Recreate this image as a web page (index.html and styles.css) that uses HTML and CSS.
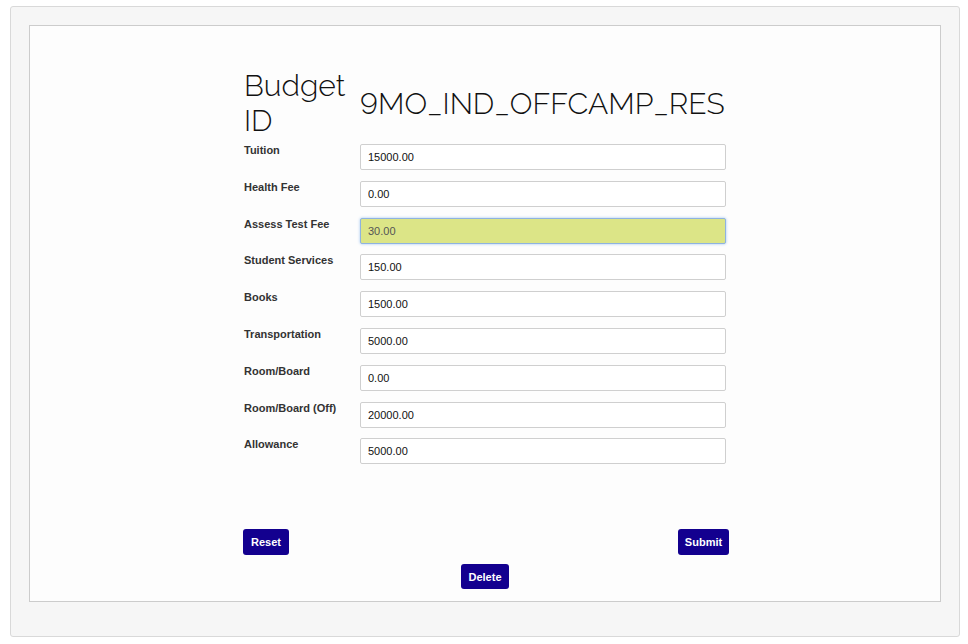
FILE: index.html
```html
<!DOCTYPE html>
<html>
<head>
<meta charset="utf-8">
<link rel="stylesheet" href="styles.css">
</head>
<body>
<div class="outer">
  <div class="inner">
    <div class="content">
      <div class="heading">
        <div class="heading-label">Budget ID</div>
        <div class="heading-value">9MO_IND_OFFCAMP_RES</div>
      </div>
      <div class="fields">
        <label class="lbl">Tuition</label><input class="fld" value="15000.00">
        <label class="lbl">Health Fee</label><input class="fld" value="0.00">
        <label class="lbl">Assess Test Fee</label><input class="fld fld-hl" value="30.00">
        <label class="lbl">Student Services</label><input class="fld" value="150.00">
        <label class="lbl">Books</label><input class="fld" value="1500.00">
        <label class="lbl">Transportation</label><input class="fld" value="5000.00">
        <label class="lbl">Room/Board</label><input class="fld" value="0.00">
        <label class="lbl">Room/Board (Off)</label><input class="fld" value="20000.00">
        <label class="lbl">Allowance</label><input class="fld" value="5000.00">
      </div>
      <div class="actions">
        <button class="btn btn-reset">Reset</button>
        <button class="btn btn-submit">Submit</button>
      </div>
      <div class="actions-center">
        <button class="btn btn-delete">Delete</button>
      </div>
    </div>
  </div>
</div>
</body>
</html>
```
FILE: styles.css
```css
html, body {
  margin: 0;
  padding: 0;
  background: #ffffff;
}
body {
  font-family: "Liberation Sans", Arial, sans-serif;
}
.outer {
  box-sizing: border-box;
  margin: 6px 0 0 10px;
  width: 950px;
  height: 631px;
  background: #f6f6f6;
  border: 1px solid #d9d9d9;
  border-radius: 3px;
  padding: 18px;
}
.inner {
  box-sizing: border-box;
  width: 912px;
  height: 577px;
  background: #fdfdfd;
  border: 1px solid #cccccc;
  padding-top: 42px;
}
.content {
  width: 485px;
  margin-left: 212px;
  padding-left: 2px;
}
.heading {
  display: flex;
  align-items: center;
  font-family: "Raleway", Lato, sans-serif;
  font-weight: 300;
  font-variant-numeric: lining-nums;
  font-feature-settings: "lnum" 1;
  color: #111;
}
.heading-label {
  width: 116px;
  font-size: 30px;
  line-height: 35px;
}
.heading-value {
  font-size: 30px;
  line-height: 35px;
}
.fields {
  display: grid;
  grid-template-columns: 116px 366px;
  row-gap: 10.8px;
  margin-top: 6px;
}
.lbl {
  font-size: 11px;
  font-weight: bold;
  color: #333;
  line-height: 13px;
  padding-top: 0;
}
.fld {
  box-sizing: border-box;
  height: 26px;
  width: 366px;
  margin: 0;
  border: 1px solid #cfcfcf;
  border-radius: 2px;
  background: #fff;
  padding: 0 7px;
  font-family: "Liberation Sans", Arial, sans-serif;
  font-size: 11px;
  color: #111;
}
.fld-hl {
  background: #dce587;
  border-color: #8fb3e0;
  box-shadow: 0 0 3px #9ec3ef;
  color: #555;
}
.actions {
  display: flex;
  justify-content: space-between;
  margin-top: 65px;
  margin-left: -1px;
}
.actions-center {
  display: flex;
  justify-content: center;
  margin-top: 9px;
  margin-left: -3px;
}
.btn {
  height: 26px;
  border: none;
  border-radius: 3px;
  background: #13008f;
  color: #fff;
  font-family: "Liberation Sans", Arial, sans-serif;
  font-size: 11px;
  font-weight: bold;
  padding: 0;
  cursor: pointer;
}
.btn-reset { width: 46px; }
.btn-submit { width: 51px; }
.btn-delete { width: 48px; height: 25px; }
```
